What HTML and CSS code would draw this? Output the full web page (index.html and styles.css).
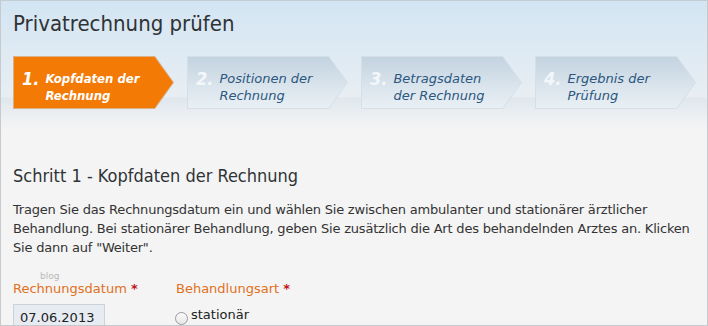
FILE: index.html
```html
<!DOCTYPE html>
<html lang="de">
<head>
<meta charset="utf-8">
<title>Privatrechnung prüfen</title>
<link rel="stylesheet" href="styles.css">
</head>
<body>
<div class="frame">
  <header class="head">
    <h1 class="title">Privatrechnung prüfen</h1>
    <ol class="steps">
      <li class="step active"><span class="num">1.</span><span class="lbl">Kopfdaten der<br>Rechnung</span></li>
      <li class="step"><span class="num">2.</span><span class="lbl">Positionen der<br>Rechnung</span></li>
      <li class="step"><span class="num">3.</span><span class="lbl">Betragsdaten<br>der Rechnung</span></li>
      <li class="step"><span class="num">4.</span><span class="lbl">Ergebnis der<br>Prüfung</span></li>
    </ol>
  </header>
  <main class="content">
    <h2 class="subtitle">Schritt 1 - Kopfdaten der Rechnung</h2>
    <p class="intro">Tragen Sie das Rechnungsdatum ein und wählen Sie zwischen ambulanter und stationärer ärztlicher Behandlung. Bei stationärer Behandlung, geben Sie zusätzlich die Art des behandelnden Arztes an. Klicken Sie dann auf "Weiter".</p>
    <div class="fields">
      <div class="field date">
        <span class="wm">blog</span>
        <label class="lab" for="d">Rechnungsdatum <span class="req">*</span></label>
        <input class="inp" id="d" type="text" value="07.06.2013">
      </div>
      <div class="field kind">
        <span class="lab">Behandlungsart <span class="req">*</span></span>
        <label class="radio"><span class="rb"></span>stationär</label>
      </div>
    </div>
  </main>
</div>
</body>
</html>
```

FILE: styles.css
```css
* { box-sizing: border-box; }
html, body { margin: 0; padding: 0; }
body {
  width: 708px;
  height: 326px;
  overflow: hidden;
  font-family: "DejaVu Sans", sans-serif;
  color: #333;
}
.frame {
  width: 708px;
  height: 326px;
  border: 1px solid #c6cacd;
  border-top-color: #c3cdd6;
  background: #f4f4f4;
  overflow: hidden;
}
.head {
  height: 130px;
  background: linear-gradient(#d3e5f3 0px, #e8eef3 96px, #dfe7ed 97px, #eaeef1 112px, #f4f4f4 129px);
  padding: 10px 0 0 12px;
}
.title {
  margin: 0;
  font-family: "DejaVu Sans Condensed", "DejaVu Sans", sans-serif;
  font-size: 22px;
  font-weight: normal;
  line-height: 26px;
  color: #2f3336;
}
.steps {
  list-style: none;
  margin: 19px 0 0 0;
  padding: 0;
  display: flex;
  gap: 13px;
}
.step {
  position: relative;
  width: 161px;
  height: 53px;
  display: flex;
  align-items: flex-start;
  padding: 12px 0 0 9px;
  gap: 6px;
  clip-path: polygon(0 0, 142px 0, 161px 26.5px, 142px 53px, 0 53px);
  background: #d4dfe8;
}
.step::before {
  content: "";
  position: absolute;
  inset: 1px;
  clip-path: polygon(0 0, 140.6px 0, 159px 25.5px, 140.6px 51px, 0 51px);
  background: linear-gradient(#c3d3e0, #dfe8ef 70%, #e9eff4);
}
.step.active { background: #d9b08a; }
.step.active::before { background: #f47a06; }
.step > span { position: relative; }
.num {
  font-family: "DejaVu Sans Condensed", "DejaVu Sans", sans-serif;
  font-size: 18px;
  font-weight: bold;
  font-style: italic;
  line-height: 22px;
  color: #f4f7fa;
}
.lbl {
  font-size: 13px;
  font-style: italic;
  line-height: 17px;
  color: #2b5780;
  margin-top: 2px;
}
.active .lbl {
  font-family: "DejaVu Sans Condensed", "DejaVu Sans", sans-serif;
  color: #fff;
  font-weight: bold;
}
.active .num { color: #fff; }
.content { padding: 33px 12px 0 12px; }
.subtitle {
  margin: 0;
  font-family: "DejaVu Sans Condensed", "DejaVu Sans", sans-serif;
  font-size: 18px;
  font-weight: normal;
  line-height: 24px;
  color: #2f3336;
}
.intro {
  margin: 12px 0 0 0;
  font-size: 13px;
  line-height: 19px;
  letter-spacing: -0.2px;
  color: #333;
}
.fields {
  display: flex;
  margin-top: 23px;
}
.field { position: relative; display: flex; flex-direction: column; }
.date { width: 163px; }
.wm {
  position: absolute;
  left: 27px;
  top: -9px;
  font-size: 9px;
  color: #b9b9b9;
}
.lab {
  font-size: 13px;
  line-height: 18px;
  color: #e0701c;
}
.req { color: #c0151a; font-weight: bold; }
.inp {
  margin: 6px 0 0 0;
  width: 92px;
  height: 24px;
  border: 1px solid #cbd3da;
  background: #e6ecf2;
  font: 13px "DejaVu Sans", sans-serif;
  color: #222;
  padding: 3px 6px 0;
}
.radio {
  margin-top: 7px;
  display: flex;
  align-items: center;
  font-size: 13px;
  color: #222;
  line-height: 16px;
}
.rb {
  width: 13px;
  height: 13px;
  border-radius: 50%;
  border: 1px solid #9a9a9a;
  background: linear-gradient(#fafafa, #e6e6e6);
  margin: 7px 3px 0 -1px;
}
```
